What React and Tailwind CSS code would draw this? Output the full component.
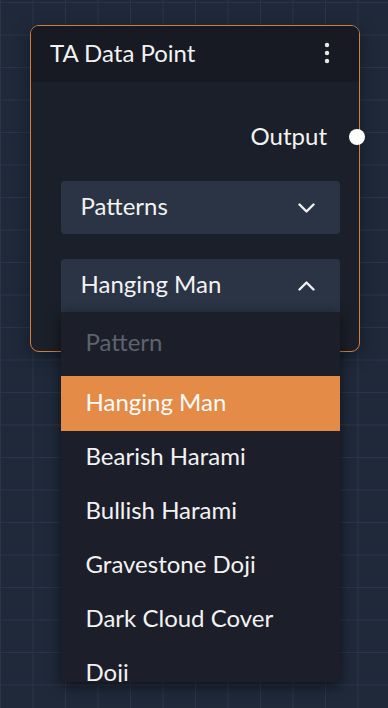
import { Fragment } from "react";

const OPTIONS = [
  "Bearish Harami",
  "Bullish Harami",
  "Gravestone Doji",
  "Dark Cloud Cover",
  "Doji",
];

function Chevron({ up }) {
  return (
    <svg width="17" height="10" viewBox="0 0 17 10" fill="none" className="shrink-0">
      <polyline
        points={up ? "1.5,8.5 8.5,1.5 15.5,8.5" : "1.5,1.5 8.5,8.5 15.5,1.5"}
        stroke="#f1f1f1"
        strokeWidth="2.4"
        strokeLinecap="round"
        strokeLinejoin="round"
      />
    </svg>
  );
}

function Kebab() {
  return (
    <svg width="6" height="22" viewBox="0 0 6 22" fill="#e8e8e8">
      <circle cx="3" cy="3" r="2.2" />
      <circle cx="3" cy="11" r="2.2" />
      <circle cx="3" cy="19" r="2.2" />
    </svg>
  );
}

export default function App() {
  return (
    <div
      className="w-[388px] h-[708px] overflow-hidden bg-[#1f293a] bg-[linear-gradient(to_right,#2a3547_1px,transparent_1px),linear-gradient(to_bottom,#2a3547_1px,transparent_1px)] bg-size-[32.5px_32.5px] bg-position-[0px_2px] pt-[25px] pl-[30px] text-[#f2f2f2]"
      style={{ fontFamily: "Lato, 'Open Sans', sans-serif" }}
    >
      <div className="relative w-[330px] rounded-[9px] border-[1.5px] border-[#d07e3c] bg-[#1b1f29] shadow-[0_6px_18px_rgba(0,0,0,0.35)]">
        <div className="h-[56px] flex items-center justify-between pl-[19px] pr-[29px] pb-[3px] bg-[#171a22] rounded-t-[8px]">
          <span className="text-[24px] leading-none">TA Data Point</span>
          <Kebab />
        </div>

        <div className="pl-[29.5px] pr-[19px] pt-[41px] pb-[39px]">
          <div className="relative h-7 flex items-center justify-end pr-[13px]">
            <span className="text-[24px] leading-none -translate-y-[1px]">Output</span>
            <span className="absolute -right-[25px] top-1/2 -translate-y-1/2 w-4 h-4 rounded-full bg-white" />
          </div>

          <div className="mt-[30px] h-[53px] rounded-[4px] bg-[#2a3445] flex items-center justify-between pl-5 pr-[25px]">
            <span className="text-[24px] leading-none -translate-y-[2px]">Patterns</span>
            <Chevron />
          </div>

          <div className="relative mt-[25px]">
            <div className="h-[53px] rounded-t-[4px] bg-[#2a3445] flex items-center justify-between pl-5 pr-[25px]">
              <span className="text-[24px] leading-none -translate-y-[2px]">Hanging Man</span>
              <Chevron up />
            </div>

            <div className="absolute left-0 top-[53px] z-10 w-[279px] h-[370px] overflow-hidden rounded-b-[5px] bg-[#1c1f2a] shadow-[0_4px_14px_rgba(0,0,0,0.55)]">
              <div className="h-[64px] flex items-center pl-[25px] pb-1 text-[24px] text-[#5d636f]">
                Pattern
              </div>
              <div className="h-[55px] flex items-center pl-[25px] pb-1 text-[24px] bg-[#e38b47] text-[#fbfbfb]">
                Hanging Man
              </div>
              {OPTIONS.map((o) => (
                <Fragment key={o}>
                  <div className="h-[54px] flex items-center pl-[25px] pb-1 text-[24px]">{o}</div>
                </Fragment>
              ))}
            </div>
          </div>
        </div>
      </div>
    </div>
  );
}
